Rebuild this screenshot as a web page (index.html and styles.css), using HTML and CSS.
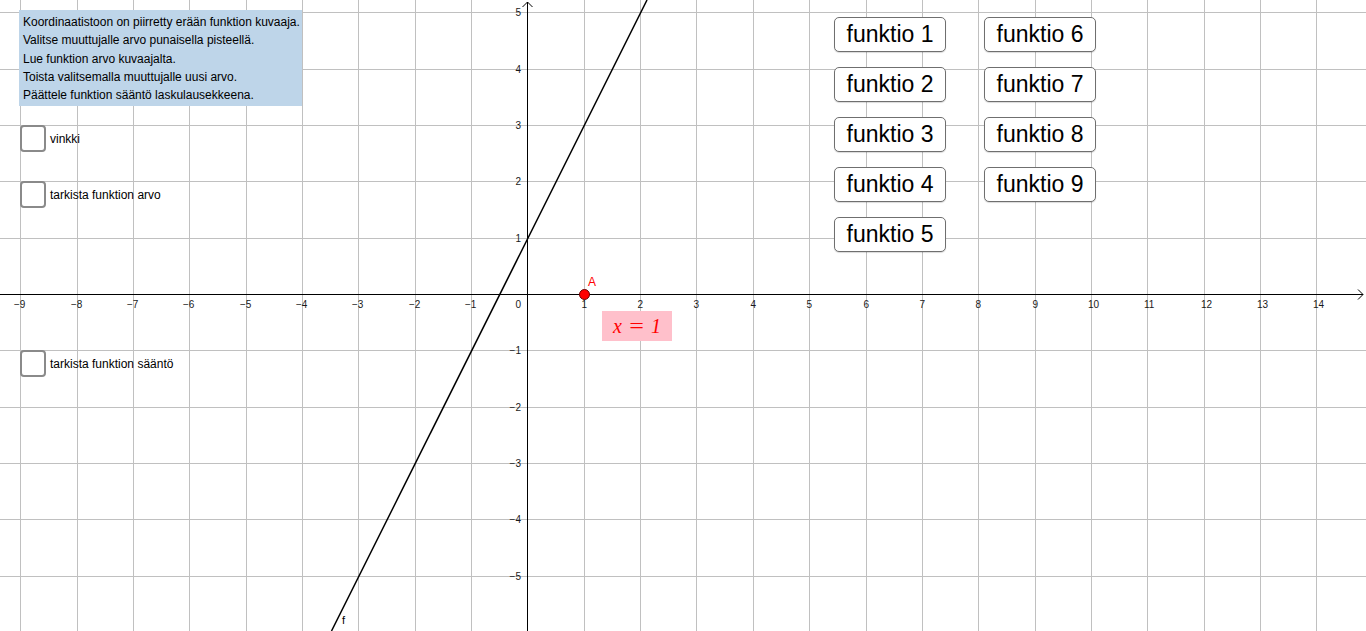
FILE: index.html
```html
<!DOCTYPE html>
<html lang="fi">
<head>
<meta charset="utf-8">
<title>Funktion sääntö</title>
<link rel="stylesheet" href="styles.css">
</head>
<body>
<div class="applet">
  <svg class="graph" width="1366" height="631" viewBox="0 0 1366 631" xmlns="http://www.w3.org/2000/svg">
    <g class="grid">
      <line x1="20.5" y1="0" x2="20.5" y2="631"/>
      <line x1="77.5" y1="0" x2="77.5" y2="631"/>
      <line x1="133.5" y1="0" x2="133.5" y2="631"/>
      <line x1="189.5" y1="0" x2="189.5" y2="631"/>
      <line x1="246.5" y1="0" x2="246.5" y2="631"/>
      <line x1="302.5" y1="0" x2="302.5" y2="631"/>
      <line x1="358.5" y1="0" x2="358.5" y2="631"/>
      <line x1="415.5" y1="0" x2="415.5" y2="631"/>
      <line x1="471.5" y1="0" x2="471.5" y2="631"/>
      <line x1="584.5" y1="0" x2="584.5" y2="631"/>
      <line x1="640.5" y1="0" x2="640.5" y2="631"/>
      <line x1="696.5" y1="0" x2="696.5" y2="631"/>
      <line x1="753.5" y1="0" x2="753.5" y2="631"/>
      <line x1="809.5" y1="0" x2="809.5" y2="631"/>
      <line x1="866.5" y1="0" x2="866.5" y2="631"/>
      <line x1="922.5" y1="0" x2="922.5" y2="631"/>
      <line x1="978.5" y1="0" x2="978.5" y2="631"/>
      <line x1="1035.5" y1="0" x2="1035.5" y2="631"/>
      <line x1="1091.5" y1="0" x2="1091.5" y2="631"/>
      <line x1="1147.5" y1="0" x2="1147.5" y2="631"/>
      <line x1="1204.5" y1="0" x2="1204.5" y2="631"/>
      <line x1="1260.5" y1="0" x2="1260.5" y2="631"/>
      <line x1="1316.5" y1="0" x2="1316.5" y2="631"/>
      <line x1="0" y1="12.5" x2="1366" y2="12.5"/>
      <line x1="0" y1="69.5" x2="1366" y2="69.5"/>
      <line x1="0" y1="125.5" x2="1366" y2="125.5"/>
      <line x1="0" y1="181.5" x2="1366" y2="181.5"/>
      <line x1="0" y1="238.5" x2="1366" y2="238.5"/>
      <line x1="0" y1="350.5" x2="1366" y2="350.5"/>
      <line x1="0" y1="407.5" x2="1366" y2="407.5"/>
      <line x1="0" y1="463.5" x2="1366" y2="463.5"/>
      <line x1="0" y1="519.5" x2="1366" y2="519.5"/>
      <line x1="0" y1="576.5" x2="1366" y2="576.5"/>
    </g>
    <g class="axes">
      <line x1="0" y1="294.5" x2="1363" y2="294.5"/>
      <polyline points="1358,289.5 1363,294.5 1358,299.5"/>
      <line x1="527.5" y1="631" x2="527.5" y2="2"/>
      <polyline points="522.5,7 527.5,2 532.5,7"/>
    </g>
    <g class="xlabels">
      <text x="14" y="308">−9</text>
      <text x="71" y="308">−8</text>
      <text x="127" y="308">−7</text>
      <text x="183" y="308">−6</text>
      <text x="240" y="308">−5</text>
      <text x="296" y="308">−4</text>
      <text x="352" y="308">−3</text>
      <text x="409" y="308">−2</text>
      <text x="465" y="308">−1</text>
      <text x="581.5" y="308">1</text>
      <text x="637.5" y="308">2</text>
      <text x="693.5" y="308">3</text>
      <text x="750.5" y="308">4</text>
      <text x="806.5" y="308">5</text>
      <text x="863.5" y="308">6</text>
      <text x="919.5" y="308">7</text>
      <text x="975.5" y="308">8</text>
      <text x="1032.5" y="308">9</text>
      <text x="1088" y="308">10</text>
      <text x="1144" y="308">11</text>
      <text x="1201" y="308">12</text>
      <text x="1257" y="308">13</text>
      <text x="1313" y="308">14</text>
    </g>
    <g class="ylabels">
      <text x="521" y="16">5</text>
      <text x="521" y="73">4</text>
      <text x="521" y="129">3</text>
      <text x="521" y="185">2</text>
      <text x="521" y="242">1</text>
      <text x="521" y="308">0</text>
      <text x="521" y="354">−1</text>
      <text x="521" y="411">−2</text>
      <text x="521" y="467">−3</text>
      <text x="521" y="523">−4</text>
      <text x="521" y="580">−5</text>
    </g>
    <line class="func" x1="647" y1="0" x2="331.5" y2="631"/>
    <text class="fname" x="342" y="624">f</text>
    <circle class="point" cx="584.5" cy="294.5" r="5"/>
    <text class="pname" x="588" y="286">A</text>
  </svg>

  <div class="left-panel">
    <div class="info">
      <p>Koordinaatistoon on piirretty erään funktion kuvaaja.</p>
      <p>Valitse muuttujalle arvo punaisella pisteellä.</p>
      <p>Lue funktion arvo kuvaajalta.</p>
      <p>Toista valitsemalla muuttujalle uusi arvo.</p>
      <p>Päättele funktion sääntö laskulausekkeena.</p>
    </div>
    <label class="check c1"><span class="box"></span><span class="ctext">vinkki</span></label>
    <label class="check c2"><span class="box"></span><span class="ctext">tarkista funktion arvo</span></label>
    <label class="check c3"><span class="box"></span><span class="ctext">tarkista funktion sääntö</span></label>
  </div>

  <div class="xlabel-box"><span class="mi">x</span><span class="mo">=</span><span class="mn">1</span></div>

  <div class="buttons">
    <button class="fbtn">funktio 1</button>
    <button class="fbtn">funktio 2</button>
    <button class="fbtn">funktio 3</button>
    <button class="fbtn">funktio 4</button>
    <button class="fbtn">funktio 5</button>
    <button class="fbtn">funktio 6</button>
    <button class="fbtn">funktio 7</button>
    <button class="fbtn">funktio 8</button>
    <button class="fbtn">funktio 9</button>
  </div>
</div>
</body>
</html>
```

FILE: styles.css
```css
html, body {
  margin: 0;
  padding: 0;
  background: #ffffff;
}
body {
  font-family: "Liberation Sans", Arial, sans-serif;
  overflow: hidden;
}
.applet {
  position: relative;
  width: 1366px;
  height: 631px;
  overflow: hidden;
  background: #ffffff;
}
.graph {
  display: block;
}
.grid line {
  stroke: #c0c0c0;
  stroke-width: 1;
}
.axes line,
.axes polyline {
  stroke: #000000;
  stroke-width: 1;
  fill: none;
}
.xlabels text,
.ylabels text {
  font-family: "Liberation Sans", Arial, sans-serif;
  font-size: 10px;
  fill: #1a1a1a;
}
.ylabels text {
  text-anchor: end;
}
.func {
  stroke: #000000;
  stroke-width: 1.5;
}
.fname {
  font-family: "Liberation Sans", Arial, sans-serif;
  font-size: 11px;
  fill: #000000;
}
.point {
  fill: #ff0000;
  stroke: #6b0000;
  stroke-width: 1;
}
.pname {
  font-family: "Liberation Sans", Arial, sans-serif;
  font-size: 12px;
  fill: #ff0000;
}

/* left panel */
.left-panel {
  position: absolute;
  left: 19px;
  top: 10px;
  display: flex;
  flex-direction: column;
  align-items: flex-start;
}
.info {
  width: 283px;
  height: 96px;
  box-sizing: border-box;
  padding: 3px 4px 0 4px;
  background: #bed5e9;
  font-size: 12px;
  line-height: 18.3px;
  color: #000000;
}
.info p {
  margin: 0;
  white-space: nowrap;
}
.check {
  display: flex;
  align-items: center;
  gap: 4px;
  margin-left: 1px;
  font-size: 12px;
  color: #000000;
}
.check.c1 { margin-top: 19px; }
.check.c2 { margin-top: 29px; }
.check.c3 { margin-top: 142px; }
.box {
  width: 22px;
  height: 23px;
  border: 2px solid #8a8a8a;
  border-radius: 4px;
  background: #ffffff;
}
.ctext {
  line-height: 14px;
  padding-top: 1px;
}

/* x = 1 label */
.xlabel-box {
  position: absolute;
  left: 602px;
  top: 311px;
  width: 70px;
  height: 30px;
  background: #ffc0cb;
  display: flex;
  align-items: center;
  justify-content: center;
  gap: 9px;
  font-family: "Liberation Serif", "Times New Roman", serif;
  font-size: 20px;
  font-style: italic;
  color: #ff0000;
}
.xlabel-box .mo {
  font-style: normal;
  transform: scaleX(1.3);
}

/* buttons */
.buttons {
  position: absolute;
  left: 834px;
  top: 17px;
  display: grid;
  grid-template-columns: 112px 112px;
  grid-template-rows: repeat(5, 35px);
  grid-auto-flow: column;
  column-gap: 38px;
  row-gap: 15px;
}
.fbtn {
  margin: 0;
  padding: 0;
  box-sizing: border-box;
  border: 1.5px solid #6f6f6f;
  border-radius: 5px;
  background: #ffffff;
  font-family: "Liberation Sans", Arial, sans-serif;
  font-size: 23px;
  color: #000000;
  line-height: 1;
  box-shadow: 0 1px 1px rgba(0, 0, 0, 0.15);
}
```
